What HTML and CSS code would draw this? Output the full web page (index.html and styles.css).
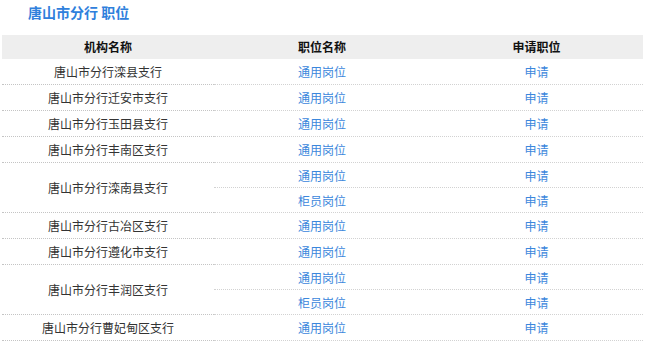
FILE: index.html
```html
<!DOCTYPE html>
<html lang="zh">
<head>
<meta charset="utf-8">
<link rel="stylesheet" href="styles.css">
</head>
<body>
<div class="page">
  <h1 class="title">唐山市分行 职位</h1>
  <table class="jobs">
    <thead>
      <tr><th class="c1">机构名称</th><th class="c2">职位名称</th><th class="c3">申请职位</th></tr>
    </thead>
    <tbody>
      <tr><td class="org">唐山市分行滦县支行</td><td><a>通用岗位</a></td><td><a>申请</a></td></tr>
      <tr><td class="org">唐山市分行迁安市支行</td><td><a>通用岗位</a></td><td><a>申请</a></td></tr>
      <tr><td class="org">唐山市分行玉田县支行</td><td><a>通用岗位</a></td><td><a>申请</a></td></tr>
      <tr><td class="org">唐山市分行丰南区支行</td><td><a>通用岗位</a></td><td><a>申请</a></td></tr>
      <tr class="sub"><td class="org" rowspan="2">唐山市分行滦南县支行</td><td><a>通用岗位</a></td><td><a>申请</a></td></tr>
      <tr class="sub"><td><a>柜员岗位</a></td><td><a>申请</a></td></tr>
      <tr><td class="org">唐山市分行古冶区支行</td><td><a>通用岗位</a></td><td><a>申请</a></td></tr>
      <tr><td class="org">唐山市分行遵化市支行</td><td><a>通用岗位</a></td><td><a>申请</a></td></tr>
      <tr class="sub"><td class="org" rowspan="2">唐山市分行丰润区支行</td><td><a>通用岗位</a></td><td><a>申请</a></td></tr>
      <tr class="sub"><td><a>柜员岗位</a></td><td><a>申请</a></td></tr>
      <tr><td class="org">唐山市分行曹妃甸区支行</td><td><a>通用岗位</a></td><td><a>申请</a></td></tr>
    </tbody>
  </table>
</div>
</body>
</html>
```

FILE: styles.css
```css
html, body {
  margin: 0;
  padding: 0;
  background: #ffffff;
}
.page {
  padding: 2px 5px 0 2px;
  font-family: "Noto Sans CJK SC", "Noto Sans", sans-serif;
}
.title {
  margin: 0 0 13px 26px;
  font-size: 14px;
  line-height: 20px;
  font-weight: bold;
  color: #2f80dc;
}
.jobs {
  width: 641px;
  border-collapse: collapse;
  table-layout: fixed;
  font-size: 12px;
}
.jobs th {
  background: #eeeeee;
  height: 24px;
  padding: 0;
  font-weight: bold;
  color: #111111;
  text-align: center;
  line-height: 24px;
}
.jobs .c1 { width: 212px; }
.jobs .c2 { width: 216px; }
.jobs td {
  height: 25px;
  padding: 0;
  text-align: center;
  line-height: 23px;
  color: #333333;
  border-bottom: 1px dotted #d2d2d2;
}
.jobs .sub td {
  height: 24px;
}
.jobs td.org {
  border-bottom: 1px dotted #c4c4c4;
}
.jobs a {
  color: #3b87dc;
  text-decoration: none;
}
```
